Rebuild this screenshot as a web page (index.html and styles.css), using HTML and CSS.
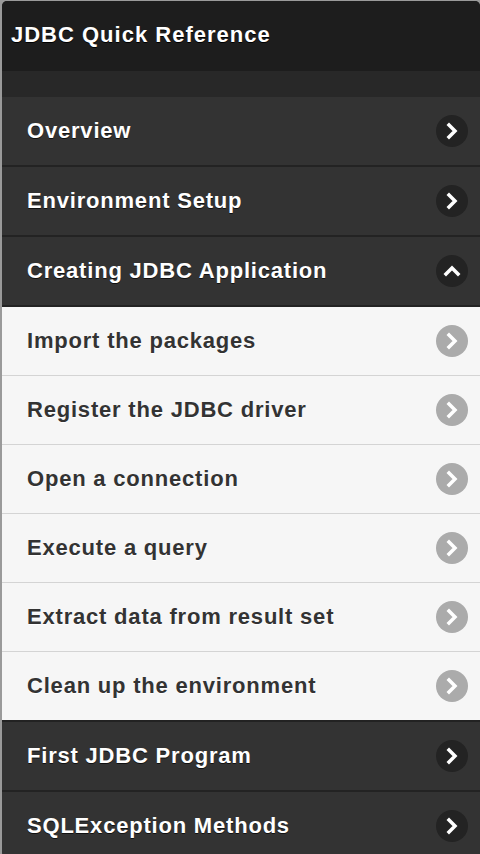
FILE: index.html
```html
<!DOCTYPE html>
<html lang="en">
<head>
    <meta charset="UTF-8">
    <meta name="viewport" content="width=device-width, initial-scale=1.0">
    <title>JDBC Quick Reference</title>
    <link rel="stylesheet" href="styles.css">
</head>
<body>

<div class="app">
    <div class="header">
        <h1>JDBC Quick Reference</h1>
    </div>
    <div class="band"></div>

    <ul class="menu">
        <li class="item dark"><span>Overview</span><i class="arrow"><svg viewBox="0 0 32 32"><path d="M13 10l6 6-6 6"/></svg></i></li>
        <li class="item dark"><span>Environment Setup</span><i class="arrow"><svg viewBox="0 0 32 32"><path d="M13 10l6 6-6 6"/></svg></i></li>
        <li class="item dark open"><span>Creating JDBC Application</span><i class="arrow"><svg viewBox="0 0 32 32"><path d="M10 19l6-6 6 6"/></svg></i></li>
        <li class="item light"><span>Import the packages</span><i class="arrow"><svg viewBox="0 0 32 32"><path d="M13 10l6 6-6 6"/></svg></i></li>
        <li class="item light"><span>Register the JDBC driver</span><i class="arrow"><svg viewBox="0 0 32 32"><path d="M13 10l6 6-6 6"/></svg></i></li>
        <li class="item light"><span>Open a connection</span><i class="arrow"><svg viewBox="0 0 32 32"><path d="M13 10l6 6-6 6"/></svg></i></li>
        <li class="item light"><span>Execute a query</span><i class="arrow"><svg viewBox="0 0 32 32"><path d="M13 10l6 6-6 6"/></svg></i></li>
        <li class="item light"><span>Extract data from result set</span><i class="arrow"><svg viewBox="0 0 32 32"><path d="M13 10l6 6-6 6"/></svg></i></li>
        <li class="item light last"><span>Clean up the environment</span><i class="arrow"><svg viewBox="0 0 32 32"><path d="M13 10l6 6-6 6"/></svg></i></li>
        <li class="item dark"><span>First JDBC Program</span><i class="arrow"><svg viewBox="0 0 32 32"><path d="M13 10l6 6-6 6"/></svg></i></li>
        <li class="item dark"><span>SQLException Methods</span><i class="arrow"><svg viewBox="0 0 32 32"><path d="M13 10l6 6-6 6"/></svg></i></li>
    </ul>
</div>

</body>
</html>
```

FILE: styles.css
```css
html, body {
    margin: 0;
    height: 100%;
    background: #9a9a9a;
    overflow: hidden;
}
body {
    font-family: "Liberation Sans", Arial, sans-serif;
}
.app {
    margin: 1px 0 0 2px;
    height: 856px;
    background: #333;
    border-radius: 5px 5px 0 5px;
    overflow: hidden;
}
.header {
    height: 70px;
    background: #1d1d1d;
    display: flex;
    align-items: center;
    padding-left: 9px;
}
.header h1 {
    margin: 0 0 2px;
    font-size: 22px;
    font-weight: bold;
    letter-spacing: 1px;
    color: #fff;
    text-shadow: 0 1px 0 #000;
}
.band {
    height: 26px;
    background: #282828;
}
.menu {
    list-style: none;
    margin: 0;
    padding: 0;
}
.item {
    display: flex;
    align-items: center;
    justify-content: space-between;
    padding: 0 12px 0 25px;
    font-size: 22px;
    font-weight: bold;
    letter-spacing: 0.8px;
}
.item.dark {
    height: 68px;
    background: #333;
    color: #fff;
    text-shadow: 0 1px 0 #111;
    border-bottom: 2px solid #232323;
}
.item.light {
    height: 68px;
    background: #f6f6f6;
    color: #333;
    text-shadow: 0 1px 0 #fff;
    border-bottom: 1px solid #d4d4d4;
}
.item.light.last {
    border-bottom: 2px solid #222;
}
.arrow {
    width: 32px;
    height: 32px;
    border-radius: 50%;
    display: flex;
}
.dark .arrow {
    background: #232323;
}
.light .arrow {
    background: #ababab;
}
.arrow svg {
    width: 32px;
    height: 32px;
    fill: none;
    stroke: #fff;
    stroke-width: 3.5;
    stroke-linecap: square;
}
```
